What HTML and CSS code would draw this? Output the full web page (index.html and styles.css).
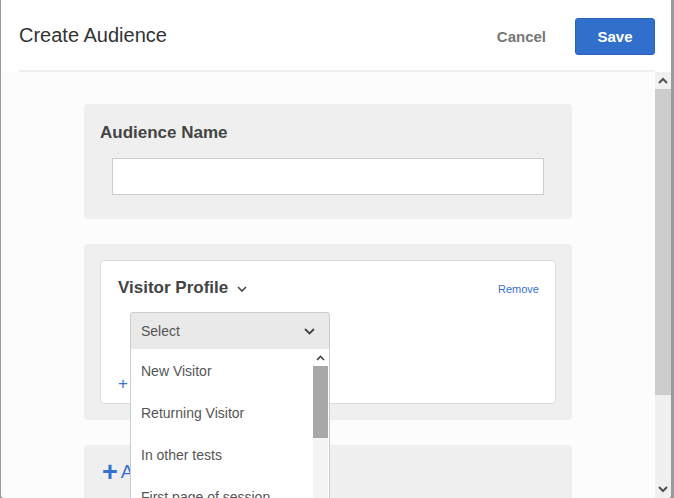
FILE: index.html
```html
<!DOCTYPE html>
<html>
<head>
<meta charset="utf-8">
<link rel="stylesheet" href="styles.css">
</head>
<body>
<div class="modal">
  <header class="modal-head">
    <h1 class="title">Create Audience</h1>
    <div class="actions">
      <button class="btn-cancel">Cancel</button>
      <button class="btn-save">Save</button>
    </div>
  </header>
  <div class="divider"></div>
  <div class="modal-body">
    <div class="content">
      <section class="card">
        <h2 class="card-title">Audience Name</h2>
        <div class="name-input"></div>
      </section>
      <section class="card card-group">
        <div class="inner">
          <div class="inner-head">
            <div class="profile-title">Visitor Profile
              <svg class="chev-sm" width="10" height="6" viewBox="0 0 10 6"><path d="M1 1 L5 5 L9 1" fill="none" stroke="#444" stroke-width="1.6"/></svg>
            </div>
            <a class="remove">Remove</a>
          </div>
          <div class="select-wrap">
            <div class="select">
              <span>Select</span>
              <svg width="11" height="7" viewBox="0 0 11 7"><path d="M1 1 L5.5 5.5 L10 1" fill="none" stroke="#444" stroke-width="1.8"/></svg>
            </div>
            <div class="dropdown">
              <ul class="options">
                <li>New Visitor</li>
                <li>Returning Visitor</li>
                <li>In other tests</li>
                <li>First page of session</li>
              </ul>
              <div class="dd-scroll">
                <div class="dd-up"><svg width="9" height="6" viewBox="0 0 9 6"><path d="M1 5 L4.5 1.5 L8 5" fill="none" stroke="#444" stroke-width="1.6"/></svg></div>
                <div class="dd-thumb"></div>
              </div>
            </div>
          </div>
          <div class="add-cond"><span class="plus">+</span> Add Condition</div>
        </div>
      </section>
      <section class="card card-add">
        <div class="add-group"><span class="plus-lg">+</span> Add Condition Group</div>
      </section>
    </div>
    <div class="scrollbar">
      <div class="sb-btn"><svg width="10" height="7" viewBox="0 0 10 7"><path d="M1 6 L5 2 L9 6" fill="none" stroke="#505050" stroke-width="2"/></svg></div>
      <div class="sb-thumb"></div>
      <div class="sb-track"></div>
      <div class="sb-btn"><svg width="10" height="7" viewBox="0 0 10 7"><path d="M1 1 L5 5 L9 1" fill="none" stroke="#505050" stroke-width="2"/></svg></div>
    </div>
  </div>
</div>
</body>
</html>
```

FILE: styles.css
```css
* { box-sizing: border-box; }
html, body { margin: 0; padding: 0; }
body {
  background: #9a9a9a;
  width: 674px;
  height: 498px;
  overflow: hidden;
  font-family: "Liberation Sans", Arial, sans-serif;
}
.modal {
  margin-left: 1px;
  width: 670px;
  height: 498px;
  background: #fff;
  border-radius: 0 0 4px 4px;
  display: flex;
  flex-direction: column;
  overflow: hidden;
}
.modal-head {
  height: 70px;
  display: flex;
  align-items: flex-start;
  justify-content: space-between;
  padding: 0 16px 0 18px;
}
.title {
  margin: 24px 0 0 0;
  font-size: 20px;
  font-weight: normal;
  color: #333;
  line-height: 22px;
}
.actions {
  display: flex;
  align-items: center;
  margin-top: 18px;
}
button { font-family: inherit; cursor: pointer; }
.btn-cancel {
  border: none;
  background: none;
  color: #777;
  font-weight: bold;
  font-size: 15px;
  padding: 0;
  margin-right: 29px;
}
.btn-save {
  width: 80px;
  height: 37px;
  background: #306fcb;
  border: 1px solid #2a63b8;
  border-radius: 3px;
  color: #fff;
  font-weight: bold;
  font-size: 15px;
}
.divider {
  height: 2px;
  background: #efefef;
  margin: 0 16px 0 18px;
}
.modal-body {
  flex: 1;
  display: flex;
  background: #fcfcfc;
  min-height: 0;
}
.content {
  flex: 1;
  padding: 32px 0 0 83px;
  overflow: hidden;
}
.card {
  width: 488px;
  background: #efefef;
  border-radius: 4px;
  padding: 16px 16px 24px 16px;
  margin-bottom: 25px;
}
.card-title {
  margin: 0;
  font-size: 17px;
  font-weight: bold;
  color: #444;
  line-height: 22px;
  margin-top: 2px;
}
.name-input {
  margin: 14px 12px 0 12px;
  height: 37px;
  background: #fff;
  border: 1px solid #cdcdcd;
}
.card-group { padding: 16px; }
.inner {
  background: #fff;
  border: 1px solid #ddd;
  border-radius: 4px;
  height: 144px;
  padding: 17px 16px 0 17px;
  position: relative;
}
.inner-head {
  display: flex;
  justify-content: space-between;
  align-items: center;
  height: 20px;
}
.profile-title {
  font-size: 17px;
  font-weight: bold;
  color: #444;
  display: flex;
  align-items: center;
}
.chev-sm { margin-left: 9px; margin-top: 1px; }
.remove {
  font-size: 11px;
  color: #3571cf;
  margin-top: 1px;
}
.select-wrap {
  position: relative;
  margin: 14px 0 0 12px;
  width: 200px;
  z-index: 2;
}
.select {
  height: 38px;
  background: #e9e9e9;
  border: 1px solid #ccc;
  border-radius: 3px 3px 0 0;
  display: flex;
  align-items: center;
  justify-content: space-between;
  padding: 0 14px 0 10px;
  font-size: 14px;
  color: #555;
}
.dropdown {
  position: absolute;
  left: 0;
  top: 37px;
  width: 200px;
  height: 170px;
  background: #fff;
  border: 1px solid #ccc;
  border-top: none;
  display: flex;
}
.options {
  list-style: none;
  margin: 0;
  padding: 1px 0 0 0;
  flex: 1;
}
.options li {
  height: 42px;
  line-height: 42px;
  padding-left: 10px;
  font-size: 14px;
  color: #555;
  white-space: nowrap;
}
.dd-scroll {
  width: 15px;
  margin-right: 1px;
  background: #f4f4f4;
}
.dd-up {
  height: 17px;
  display: flex;
  align-items: center;
  justify-content: center;
  background: #fff;
}
.dd-thumb {
  height: 72px;
  background: #a8a8a8;
}
.add-cond {
  margin-top: 24px;
  font-size: 14px;
  color: #3571cf;
}
.plus { font-size: 17px; }
.card-add { padding: 16px 16px 24px 18px; }
.add-group {
  font-size: 19px;
  color: #3571cf;
  display: flex;
  align-items: center;
}
.plus-lg {
  font-size: 27px;
  font-weight: bold;
  margin-right: 3px;
  line-height: 22px;
}
.scrollbar {
  width: 16px;
  display: flex;
  flex-direction: column;
  background: #f0f0f0;
}
.sb-btn {
  height: 17px;
  display: flex;
  align-items: center;
  justify-content: center;
}
.sb-thumb {
  height: 306px;
  background: #cdcdcd;
}
.sb-track { flex: 1; }
```
